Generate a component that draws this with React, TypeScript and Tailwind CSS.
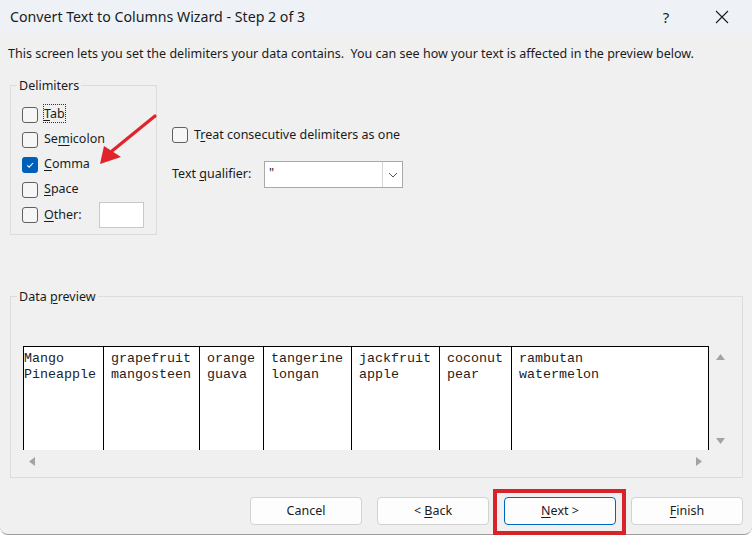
import React from "react";

// ── Small pieces ──────────────────────────────────────────────────────────────

const ui = "font-['Segoe_UI','Noto_Sans',sans-serif]";

function Check({ checked }: { checked?: boolean }) {
  if (checked) {
    return (
      <span className="w-[16px] h-[16px] shrink-0 rounded-[3px] bg-[#005fb8] flex items-center justify-center">
        <svg width="10" height="10" viewBox="0 0 10 10">
          <path d="M2.2 5.3l2 1.9 3.8-4.2" stroke="white" strokeWidth="1.1" fill="none" />
        </svg>
      </span>
    );
  }
  return <span className="w-[16px] h-[16px] shrink-0 rounded-[3px] border border-[#606060] bg-[#f6f6f6]" />;
}

function U({ children }: { children: React.ReactNode }) {
  return <span className="underline underline-offset-[2px] decoration-1">{children}</span>;
}

function DelimRow({ checked, children }: { checked?: boolean; children: React.ReactNode }) {
  return (
    <div className="h-[25px] flex items-center gap-[6px]">
      <Check checked={checked} />
      <span>{children}</span>
    </div>
  );
}

function Button({ children, primary }: { children: React.ReactNode; primary?: boolean }) {
  return (
    <div
      className={`w-[112px] h-[28px] rounded-[4px] flex items-center justify-center text-[12.5px] text-[#1b1b1b] bg-[#fdfdfd] border ${
        primary ? "border-[#0067c0]" : "border-[#d2d2d2]"
      }`}
    >
      {children}
    </div>
  );
}

const columns = [
  { w: "w-[80px]", pad: "pl-0", a: "Mango", b: "Pineapple" },
  { w: "w-[96px]", pad: "pl-[7px]", a: "grapefruit", b: "mangosteen" },
  { w: "w-[64px]", pad: "pl-[7px]", a: "orange", b: "guava" },
  { w: "w-[88px]", pad: "pl-[7px]", a: "tangerine", b: "longan" },
  { w: "w-[88px]", pad: "pl-[7px]", a: "jackfruit", b: "apple" },
  { w: "w-[72px]", pad: "pl-[7px]", a: "coconut", b: "pear" },
];

function Tri({ dir }: { dir: "up" | "down" | "left" | "right" }) {
  const d = {
    up: "M0 7L4.5 1L9 7Z",
    down: "M0 1L4.5 7L9 1Z",
    left: "M7 0L1 4.5L7 9Z",
    right: "M1 0L7 4.5L1 9Z",
  }[dir];
  return (
    <svg width="9" height="9" viewBox="0 0 9 9">
      <path d={d} fill="#a3a3a3" />
    </svg>
  );
}

// ── Main ──────────────────────────────────────────────────────────────────────

export default function App() {
  return (
    <div className={`w-[752px] h-[536px] bg-white overflow-hidden relative ${ui} text-[#1b1b1b]`}>
      <div className="h-[535px] bg-[#f0f0f0] rounded-b-[8px] border-b border-[#9c9c9c] flex flex-col">
        {/* Title bar */}
        <div className="h-[34px] bg-[#eef2f7] flex items-center pl-[10px]">
          <span className="text-[14.2px] flex-1">Convert Text to Columns Wizard - Step 2 of 3</span>
          <span className="text-[15px] w-[20px] text-center mr-[39px]">?</span>
          <svg width="14" height="14" viewBox="0 0 14 14" className="mr-[23px]">
            <path d="M1 1L13 13M13 1L1 13" stroke="#1b1b1b" strokeWidth="1.1" />
          </svg>
        </div>

        <p className="mt-[11px] pl-[8px] text-[12.5px] leading-[18px]">
          This screen lets you set the delimiters your data contains.&nbsp; You can see how your text is affected in the preview below.
        </p>

        {/* Delimiters + options */}
        <div className="mt-[22px] pl-[10px] flex text-[12.5px]">
          <div className="relative w-[147px] h-[150px] border border-[#dcdcdc] pl-[11px] pt-[16px]">
            <span className="absolute left-[6px] -top-[9px] px-[2px] bg-[#f0f0f0] leading-[18px]">Delimiters</span>
            <DelimRow>
              <span className="outline outline-1 outline-dotted outline-[#333] outline-offset-0">
                <U>T</U>ab
              </span>
            </DelimRow>
            <DelimRow>
              Se<U>m</U>icolon
            </DelimRow>
            <DelimRow checked>
              <U>C</U>omma
            </DelimRow>
            <DelimRow>
              <U>S</U>pace
            </DelimRow>
            <div className="h-[26px] flex items-center gap-[6px]">
              <Check />
              <span className="w-[49px]">
                <U>O</U>ther:
              </span>
              <span className="w-[45px] h-[26px] bg-white border border-[#c8c8c8]" />
            </div>
          </div>

          <div className="ml-[15px] flex flex-col">
            <div className="mt-[40px] h-[20px] flex items-center gap-[6px]">
              <Check />
              <span>
                T<U>r</U>eat consecutive delimiters as one
              </span>
            </div>
            <div className="mt-[16px] flex items-center">
              <span className="w-[92px]">
                Text <U>q</U>ualifier:
              </span>
              <div className="w-[139px] h-[27px] bg-white border border-[#a9a9a9] flex">
                <span className="flex-1 pl-[4px] leading-[22px]">"</span>
                <span className="w-[20px] border-l border-[#d6d6d6] flex items-center justify-center">
                  <svg width="10" height="6" viewBox="0 0 10 6">
                    <path d="M1 1l4 4 4-4" stroke="#555" strokeWidth="1" fill="none" />
                  </svg>
                </span>
              </div>
            </div>
          </div>
        </div>

        {/* Data preview */}
        <div className="mt-[61px] ml-[10px] relative w-[733px] h-[182px] border border-[#dcdcdc] pl-[12px] pt-[49px] text-[12.5px]">
          <span className="absolute left-[6px] -top-[9px] px-[2px] bg-[#f0f0f0] leading-[18px]">
            Data <U>p</U>review
          </span>
          <div className="flex">
            <div className="w-[686px] h-[104px] bg-white border-t border-l border-r border-black flex font-['Courier_New','Liberation_Mono',monospace] text-[13.33px] leading-[16px] text-[#222]">
              {columns.map((c) => (
                <div key={c.a} className={`${c.w} ${c.pad} shrink-0 border-r border-black pt-[4px] whitespace-pre`}>
                  <div>{c.a}</div>
                  <div>{c.b}</div>
                </div>
              ))}
              <div className="flex-1 pl-[7px] pt-[4px] whitespace-pre">
                <div>rambutan</div>
                <div>watermelon</div>
              </div>
            </div>
            <div className="w-[22px] h-[104px] flex flex-col items-center justify-between pt-[7px] pb-[4px]">
              <Tri dir="up" />
              <Tri dir="down" />
            </div>
          </div>
          <div className="w-[686px] h-[22px] flex items-center justify-between px-[5px]">
            <Tri dir="left" />
            <Tri dir="right" />
          </div>
        </div>

        {/* Buttons */}
        <div className="mt-[19px] pr-[9px] flex justify-end gap-[15px]">
          <Button>Cancel</Button>
          <Button>
            <span>
              &lt; <U>B</U>ack
            </span>
          </Button>
          <div className="relative">
            <Button primary>
              <span>
                <U>N</U>ext &gt;
              </span>
            </Button>
            <span className="absolute -left-[11px] -right-[10px] -top-[8px] -bottom-[10px] border-[4px] border-[#d9232a] pointer-events-none" />
          </div>
          <Button>
            <span>
              <U>F</U>inish
            </span>
          </Button>
        </div>
      </div>

      {/* Red annotation arrow */}
      <svg className="absolute left-[94px] top-[110px] pointer-events-none" width="66" height="60" viewBox="0 0 66 60">
        <path d="M61 6L18 41" stroke="#e0242b" strokeWidth="3.2" strokeLinecap="round" />
        <path d="M6 54L10 36L27 47Z" fill="#e0242b" />
      </svg>
    </div>
  );
}
